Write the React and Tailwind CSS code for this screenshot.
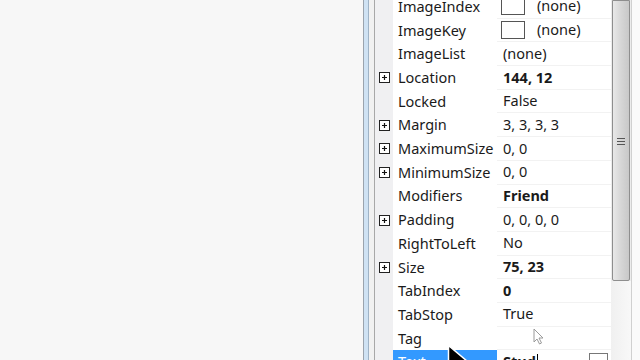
import React from "react";

const rows = [
  { n: "ImageIndex", v: "(none)", img: true },
  { n: "ImageKey", v: "(none)", img: true },
  { n: "ImageList", v: "(none)" },
  { n: "Location", v: "144, 12", b: true, plus: true },
  { n: "Locked", v: "False" },
  { n: "Margin", v: "3, 3, 3, 3", plus: true },
  { n: "MaximumSize", v: "0, 0", plus: true },
  { n: "MinimumSize", v: "0, 0", plus: true },
  { n: "Modifiers", v: "Friend", b: true },
  { n: "Padding", v: "0, 0, 0, 0", plus: true },
  { n: "RightToLeft", v: "No" },
  { n: "Size", v: "75, 23", b: true, plus: true },
  { n: "TabIndex", v: "0", b: true },
  { n: "TabStop", v: "True" },
  { n: "Tag", v: "" },
];

function Plus() {
  return (
    <svg width="11" height="11" viewBox="0 0 11 11" className="block">
      <rect x="0.5" y="0.5" width="10" height="10" fill="#fff" stroke="#222" />
      <path d="M3 5.5h5M5.5 3v5" stroke="#111" strokeWidth="1.2" />
    </svg>
  );
}

export default function App() {
  return (
    <div
      className="relative flex w-[640px] h-[360px] overflow-hidden bg-[#f7f7f7] text-[#1a1a1a] text-[14.5px]"
      style={{ fontFamily: '"Noto Sans", "Open Sans", sans-serif' }}
    >
      <div className="w-[363px] shrink-0" />
      {/* frame borders */}
      <div className="w-px shrink-0 bg-[#9aa3ad]" />
      <div className="w-[4px] shrink-0 bg-[#cfe2f3]" />
      <div className="w-px shrink-0 bg-[#9fb3c6]" />
      <div className="w-[5px] shrink-0 bg-[#f1f1f1]" />
      <div className="w-px shrink-0 bg-[#a8a8a8]" />
      {/* property grid */}
      <div className="w-[236px] shrink-0 bg-white">
        <div className="mt-[-5px] flex flex-col">
          {rows.map((r) => (
            <div key={r.n} className="flex h-[23.7px] items-center">
              <div className="w-[18px] h-full shrink-0 bg-[#f0f0f2] flex items-center justify-center">
                {r.plus && <Plus />}
              </div>
              <div className="w-[104px] h-full shrink-0 flex items-center pl-[5px] whitespace-nowrap">
                {r.n}
              </div>
              <div className={"flex-1 h-full flex items-center whitespace-nowrap border-b border-[#f2f2f2] " + (r.img ? "pl-[4px]" : "pl-[6px]")}>
                {r.img && (
                  <span className="inline-block w-[24px] h-[18px] border border-[#555] bg-white mr-[12px]" />
                )}
                <span className={r.b ? "font-bold" : ""}>{r.v}</span>
              </div>
            </div>
          ))}
          <div className="flex h-[23.7px] items-center">
            <div className="w-[18px] h-full shrink-0 bg-[#f0f0f2]" />
            <div className="w-[104px] h-full shrink-0 bg-[#3399ff] text-white flex items-center pl-[5px]">
              Text
            </div>
            <div className="flex-1 h-full flex items-center pl-[6px] pr-[3px]">
              <span className="font-bold">Stud</span>
              <span className="ml-[1px] w-px h-[16px] bg-black" />
              <span className="ml-auto w-[19px] h-[18px] border border-[#777] bg-white" />
            </div>
          </div>
        </div>
      </div>
      {/* scrollbar */}
      <div className="w-[20px] shrink-0 bg-[#ececec] flex flex-col">
        <div className="h-[281px] mx-[1px] border border-[#8e8e8e] rounded-b-[2px] bg-gradient-to-r from-[#e8e8e8] via-[#d6d6d6] to-[#c8c8c8] flex items-center justify-center">
          <div className="flex flex-col gap-[2px] mt-[2px]">
            <div className="w-[8px] h-px bg-[#555]" />
            <div className="w-[8px] h-px bg-[#555]" />
            <div className="w-[8px] h-px bg-[#555]" />
          </div>
        </div>
        <div className="flex-1 bg-gradient-to-r from-[#f0f0f0] to-[#f8f8f8]" />
      </div>
      <div className="w-px shrink-0 bg-[#d0d0d0]" />
      <div className="flex-1 bg-[#fafafa]" />

      {/* small gray cursor */}
      <svg className="absolute left-[533px] top-[328px]" width="12" height="18" viewBox="0 0 12 18">
        <path d="M1 1v13l3-3 2.5 5 2-1-2.5-5h4z" fill="#fff" stroke="#9a9a9a" strokeWidth="1" />
      </svg>
      {/* big black cursor */}
      <svg className="absolute left-[447px] top-[344px]" width="26" height="30" viewBox="0 0 26 30">
        <path d="M1.5 1.5v24l6-6 5 10 4-2-5-10h9z" fill="#000" stroke="#fff" strokeWidth="1.5" />
      </svg>
    </div>
  );
}
